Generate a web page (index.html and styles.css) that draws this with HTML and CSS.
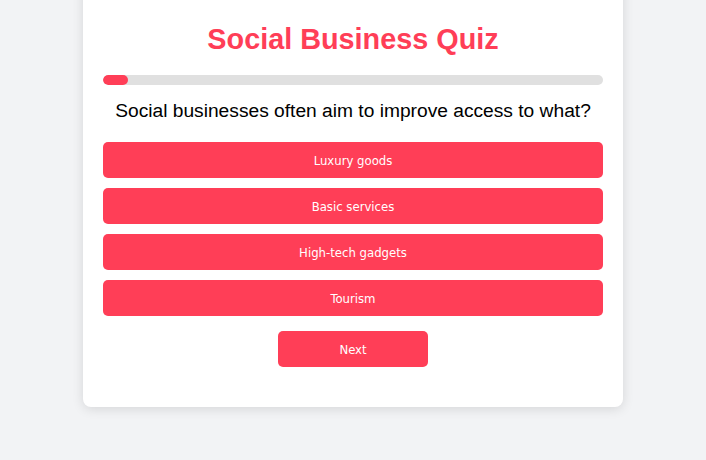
FILE: index.html
```html
<!DOCTYPE html>
<html>
<head>
<meta charset="utf-8">
<link rel="stylesheet" href="styles.css">
</head>
<body>
<div class="card">
  <h1 class="title">Social Business Quiz</h1>
  <div class="progress"><div class="fill" style="width:5%"></div></div>
  <p class="question">Social businesses often aim to improve access to what?</p>
  <div class="options">
    <button class="btn">Luxury goods</button>
    <button class="btn">Basic services</button>
    <button class="btn">High-tech gadgets</button>
    <button class="btn">Tourism</button>
  </div>
  <div class="actions"><button class="btn next">Next</button></div>
</div>
</body>
</html>
```
FILE: styles.css
```css
html, body { margin: 0; padding: 0; }
body {
  background: #f2f3f5;
  font-family: "Liberation Sans", Arial, sans-serif;
  height: 460px;
  overflow: hidden;
}
.card {
  width: 500px;
  margin: -20px auto 0;
  padding: 20px;
  background: #fff;
  border-radius: 8px;
  box-shadow: 0 2px 12px rgba(0,0,0,0.12);
}
.title {
  margin: 23px 0 19px;
  text-align: center;
  color: #ff3e57;
  font-size: 28.8px;
  font-weight: bold;
  line-height: 33px;
}
.progress {
  height: 10px;
  background: #e0e0e0;
  border-radius: 5px;
  overflow: hidden;
}
.fill {
  height: 100%;
  background: #ff3e57;
  border-radius: 5px;
}
.question {
  margin: 14px 0 20px;
  text-align: center;
  font-size: 19.2px;
  line-height: 23px;
  color: #000;
}
.options {
  display: flex;
  flex-direction: column;
  gap: 10px;
}
.btn {
  height: 36px;
  border: none;
  border-radius: 5px;
  background: #ff3e57;
  color: #fff;
  font-family: "DejaVu Sans Condensed", "DejaVu Sans", sans-serif;
  font-stretch: condensed;
  font-size: 13px;
  padding: 0;
  cursor: pointer;
}
.actions {
  display: flex;
  justify-content: center;
  margin: 15px 0 20px;
}
.next { width: 150px; }
```
